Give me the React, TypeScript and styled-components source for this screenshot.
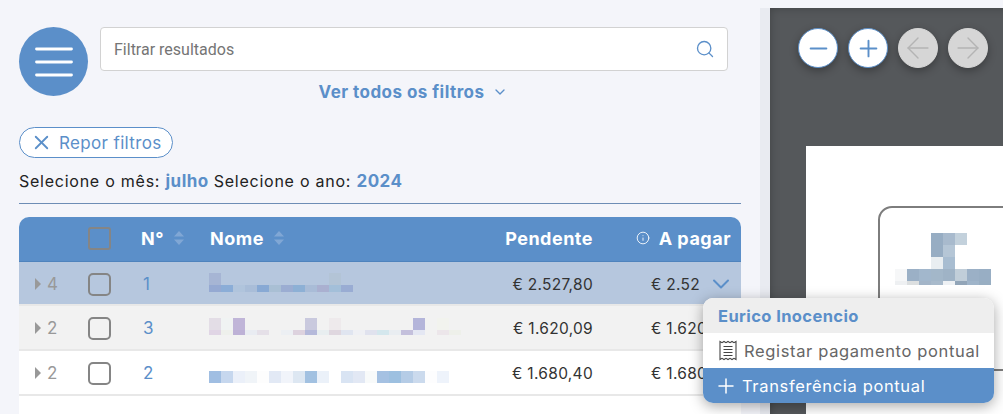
import React from 'react';
import styled, { createGlobalStyle } from 'styled-components';
import { ArrowLeft, ArrowRight, ChevronDown, Info, Minus, Plus, Search, X } from 'lucide-react';

const BLUE = '#5b8fc9';

const GlobalStyle = createGlobalStyle`
  html, body {
    margin: 0;
    padding: 0;
    background: #f4f5fa;
    font-family: Inter, "Liberation Sans", sans-serif;
  }
  * { box-sizing: border-box; }
`;

type Band = { y: number; h: number; colors: string[] };

const rowMosaics: Record<string, Band[]> = {
  first: [
    { y: 11, h: 12, colors: ['#a6b5d4', '', '', '', '', '', '', '', '', '', '#b3c4d6'] },
    { y: 23, h: 7, colors: ['#95a9d2', '#8badd7', '#b0c4dc', '#a9bdd8', '#88a9d4', '#a9bfd4', '#9badd2', '#8db0d5', '#a9bcd7', '#aab0d0', '#a3bfd9', '#99acd3'] },
  ],
  second: [
    { y: 12, h: 12, colors: ['#e3dde6', '#f0f3f3', '#c0b5d8', '', '', '', '', '', '#c9c9de', '', '#eeeaec', '', '', '', '', '', '', '#b4b5da', '', '#f2f3ee'] },
    { y: 24, h: 5, colors: ['#e0d5e5', '#eef0ec', '#bdb1d6', '#e9ecf2', '#e5e0e8', '', '#eceff3', '#ddd2de', '#b5b9da', '#e8eef0', '#dfd7df', '#e0e5f0', '#eff0f4', '#e0e2ee', '#d4e7ed', '#e9edf1', '#c4c0dc', '#e4e7f3', '', '#ece6ea', '#eef0ea'] },
  ],
  third: [
    { y: 20, h: 12, colors: ['#a0bee2', '#c6d7ee', '#ebf0f9', '#f0f4f8', '#fdfdfd', '#e2e9f5', '#f1f4fa', '#dde7f2', '#a2c1e1', '#ebf1f9', '', '#d9e4f3', '#e2e8f4', '#f8fafa', '#a5c1e2', '#9dc0e0', '#b5cce6', '#cbdaed', '#fdfdfe', '#eef3fb'] },
  ],
};

const cardMosaic: Band[] = [
  { y: 0, h: 12, colors: ['', '', '', '#97adc3', '#a8bacd', '#c3d1dc'] },
  { y: 12, h: 12, colors: ['', '', '', '#97adc3', '#b5c6d6'] },
  { y: 24, h: 12, colors: ['', '', '', '#e9eef1', '#a8bdd1'] },
  { y: 36, h: 12, colors: ['#f6f7f8', '#9bb0c6', '#a2b7cc', '#a3b7c9', '#9fb3c6', '#c1ced9', '#9bb0c6', '#98aec4'] },
  { y: 48, h: 4, colors: ['#eef0f2', '#dcdfe0', '#a3b5c8', '#a8bacb', '#eef1f4', '#92a5b8', '#9fb4c9', '#98aec2'] },
];

const Mosaic: React.FC<{ bands: Band[]; width: number; height: number }> = ({ bands, width, height }) => (
  <svg width={width} height={height} style={{ display: 'block' }}>
    {bands.map((band) =>
      band.colors.map((color, i) =>
        color ? <rect key={`${band.y}-${i}`} x={i * 12} y={band.y} width={12} height={band.h} fill={color} /> : null,
      ),
    )}
  </svg>
);

const rows = [
  { count: 4, no: 1, mosaic: 'first', pending: '€ 2.527,80', pay: '€ 2.52', tone: 'selected' as const },
  { count: 2, no: 3, mosaic: 'second', pending: '€ 1.620,09', pay: '€ 1.620,09', tone: 'grey' as const },
  { count: 2, no: 2, mosaic: 'third', pending: '€ 1.680,40', pay: '€ 1.680,40', tone: 'white' as const },
];

const rowBackgrounds = { selected: '#b6c7de', grey: '#f2f2f2', white: '#ffffff' };

export default function App() {
  return (
    <Page>
      <GlobalStyle />
      <LeftPanel>
        <TopRow>
          <MenuButton>
            <svg width="38" height="30" viewBox="0 0 38 30">
              <path d="M1.5 2h35M1.5 15h35M1.5 28h35" stroke="#fff" strokeWidth="2.8" strokeLinecap="round" />
            </svg>
          </MenuButton>
          <SearchColumn>
            <SearchBox>
              <SearchInput>Filtrar resultados</SearchInput>
              <Search size={20} color={BLUE} strokeWidth={1.6} />
            </SearchBox>
            <AllFilters>
              Ver todos os filtros
              <ChevronDown size={16} strokeWidth={2} />
            </AllFilters>
          </SearchColumn>
        </TopRow>

        <ResetPill>
          <X size={23} strokeWidth={1.9} />
          Repor filtros
        </ResetPill>

        <PeriodLine>
          Selecione o mês: <strong>julho</strong>
          <PeriodGap />
          Selecione o ano: <strong>2024</strong>
        </PeriodLine>
        <Divider />

        <Table>
          <HeaderRow>
            <span />
            <Checkbox $onBlue />
            <HeaderCell>
              N°
              <SortIcon />
            </HeaderCell>
            <HeaderCell>
              Nome
              <SortIcon />
            </HeaderCell>
            <HeaderCell $right>Pendente</HeaderCell>
            <PayHeader>
              <Info size={14} strokeWidth={1.5} />
              A pagar
            </PayHeader>
          </HeaderRow>

          {rows.map((row) => (
            <Row key={row.no} $tone={row.tone}>
              <CountCell>
                <Caret />
                {row.count}
              </CountCell>
              <Checkbox />
              <NumberCell>{row.no}</NumberCell>
              <NameCell>
                <Mosaic bands={rowMosaics[row.mosaic]} width={256} height={44} />
              </NameCell>
              <AmountCell>{row.pending}</AmountCell>
              <PayCell>
                {row.pay}
                {row.tone === 'selected' && <ChevronDown size={28} strokeWidth={1.7} color={BLUE} />}
              </PayCell>
            </Row>
          ))}
        </Table>
      </LeftPanel>

      <Viewer>
        <ViewerTools>
          <RoundButton>
            <Minus size={27} strokeWidth={1.7} />
          </RoundButton>
          <RoundButton>
            <Plus size={27} strokeWidth={1.7} />
          </RoundButton>
          <RoundButton $disabled>
            <ArrowLeft size={34} strokeWidth={1} />
          </RoundButton>
          <RoundButton $disabled>
            <ArrowRight size={34} strokeWidth={1} />
          </RoundButton>
        </ViewerTools>
        <Sheet>
          <SheetCard>
            <Mosaic bands={cardMosaic} width={96} height={52} />
          </SheetCard>
        </Sheet>
      </Viewer>

      <ContextMenu>
        <MenuTitle>Eurico Inocencio</MenuTitle>
        <MenuItem>
          <svg width="18" height="21" viewBox="0 0 18 21" fill="none" stroke="#444" strokeWidth="1.1">
            <path d="M1 1.5l2 1.2 2-1.2 2 1.2 2-1.2 2 1.2 2-1.2 2 1.2 2-1.2v18l-2-1.2-2 1.2-2-1.2-2 1.2-2-1.2-2 1.2-2-1.2-2 1.2z" />
            <path d="M4.5 6.5h9M4.5 9.5h9M4.5 12.5h9M4.5 15.5h9" />
          </svg>
          Registar pagamento pontual
        </MenuItem>
        <MenuItem $active>
          <Plus size={24} strokeWidth={1.5} />
          Transferência pontual
        </MenuItem>
      </ContextMenu>
    </Page>
  );
}

const SortIcon = () => (
  <svg width="10" height="14" viewBox="0 0 10 14" fill="#80a7d5">
    <path d="M5 0l5 5.5H0zM5 14L0 8.5h10z" />
  </svg>
);

const Page = styled.div`
  position: relative;
  display: flex;
  width: 1003px;
  height: 414px;
  overflow: hidden;
  background: #f4f5fa;
`;

const LeftPanel = styled.div`
  display: flex;
  flex-direction: column;
  flex: 0 0 760px;
  padding: 27px 19px 0;
`;

const TopRow = styled.div`
  display: flex;
  gap: 12px;
  padding-right: 13px;
`;

const MenuButton = styled.div`
  display: flex;
  align-items: center;
  justify-content: center;
  flex: 0 0 69px;
  height: 69px;
  border-radius: 50%;
  background: ${BLUE};
`;

const SearchColumn = styled.div`
  display: flex;
  flex-direction: column;
  flex: 1;
`;

const SearchBox = styled.div`
  display: flex;
  align-items: center;
  justify-content: space-between;
  height: 44px;
  padding: 0 12px 0 13px;
  background: #fff;
  border: 1px solid #d2d2d2;
  border-radius: 4px;
`;

const SearchInput = styled.span`
  font-family: Roboto, sans-serif;
  font-size: 16px;
  color: #757575;
`;

const AllFilters = styled.div`
  display: flex;
  align-items: center;
  justify-content: center;
  gap: 8px;
  margin-top: 11px;
  padding-right: 1px;
  font-size: 17px;
  font-weight: 700;
  letter-spacing: 0.45px;
  line-height: 20px;
  color: ${BLUE};
`;

const ResetPill = styled.div`
  display: flex;
  align-items: center;
  gap: 6px;
  align-self: flex-start;
  width: 154px;
  height: 31px;
  margin-top: 25px;
  padding-left: 10px;
  border: 1px solid ${BLUE};
  border-radius: 16px;
  background: #fff;
  font-size: 17px;
  letter-spacing: 0.35px;
  color: ${BLUE};
`;

const PeriodLine = styled.div`
  margin-top: 13px;
  font-size: 16px;
  line-height: 20px;
  letter-spacing: 0.75px;
  color: #222;
  white-space: nowrap;

  strong {
    font-size: 17px;
    font-weight: 700;
    letter-spacing: 0.5px;
    color: ${BLUE};
  }
`;

const PeriodGap = styled.span`
  display: inline-block;
  width: 5px;
`;

const Divider = styled.div`
  height: 1px;
  margin-top: 12px;
  background: #6d8db5;
`;

const Table = styled.div`
  flex: 1;
  margin-top: 13px;
  background: #fff;
  border-radius: 10px 10px 0 0;
  overflow: hidden;
`;

const columns = '69px 53px 69px 1fr 120px 148px';

const HeaderRow = styled.div`
  display: grid;
  grid-template-columns: ${columns};
  align-items: center;
  height: 45px;
  padding-bottom: 2px;
  background: ${BLUE};
  border-bottom: 1px solid #4f83bd;
`;

const HeaderCell = styled.div<{ $right?: boolean }>`
  display: flex;
  align-items: center;
  justify-content: ${({ $right }) => ($right ? 'flex-end' : 'flex-start')};
  gap: 10px;
  font-size: 18px;
  font-weight: 700;
  letter-spacing: 0.5px;
  color: #fff;
`;

const PayHeader = styled(HeaderCell)`
  justify-content: flex-end;
  gap: 9px;
  padding-right: 10px;
`;

const Row = styled.div<{ $tone: keyof typeof rowBackgrounds }>`
  display: grid;
  grid-template-columns: ${columns};
  align-items: center;
  height: 45px;
  background: ${({ $tone }) => rowBackgrounds[$tone]};
  border-bottom: 2px solid #e8e8e8;
  font-size: 15.5px;

  &:nth-child(2) {
    height: 44px;
  }
`;

const CountCell = styled.div`
  display: flex;
  align-items: center;
  gap: 6px;
  padding-left: 16px;
  font-size: 17px;
  color: #999;
`;

const Caret = styled.span`
  width: 0;
  height: 0;
  border-left: 6px solid #999;
  border-top: 6px solid transparent;
  border-bottom: 6px solid transparent;
`;

const Checkbox = styled.span<{ $onBlue?: boolean }>`
  display: block;
  width: 23px;
  height: 23px;
  border: 2px solid #858585;
  border-radius: ${({ $onBlue }) => ($onBlue ? '3px' : '5px')};
`;

const NumberCell = styled.div`
  padding-left: 2px;
  font-size: 17px;
  color: ${BLUE};
`;

const NameCell = styled.div`
  align-self: start;
  margin-left: -1px;
`;

const AmountCell = styled.div`
  text-align: right;
  letter-spacing: 0.3px;
  color: #333;
`;

const PayCell = styled.div`
  display: flex;
  align-items: center;
  gap: 7px;
  padding-left: 58px;
  letter-spacing: 0.3px;
  color: #333;
  white-space: nowrap;
`;

const Viewer = styled.div`
  position: relative;
  display: flex;
  flex-direction: column;
  flex: 1;
  min-width: 0;
  margin-top: 8px;
  background: #55585b;
  border-left: 10px solid #e9ebf1;
  box-shadow: inset 6px 6px 10px -6px rgba(0, 0, 0, 0.25);
`;

const ViewerTools = styled.div`
  display: flex;
  gap: 10px;
  padding: 20px 0 0 28px;
`;

const RoundButton = styled.div<{ $disabled?: boolean }>`
  display: flex;
  align-items: center;
  justify-content: center;
  flex: 0 0 40px;
  height: 40px;
  border-radius: 50%;
  background: ${({ $disabled }) => ($disabled ? '#d6d6d6' : '#fff')};
  border: 1px solid ${({ $disabled }) => ($disabled ? '#d6d6d6' : BLUE)};
  color: ${({ $disabled }) => ($disabled ? '#b4b4b4' : BLUE)};
  box-shadow: 0 3px 8px rgba(0, 0, 0, 0.3);
`;

const Sheet = styled.div`
  flex: 1;
  margin: 78px 0 0 36px;
  padding: 60px 0 0 72px;
  background: #fff;
`;

const SheetCard = styled.div`
  width: 220px;
  height: 165px;
  padding: 25px 0 0 15px;
  border: 2px solid #7d7d7d;
  border-radius: 14px;
`;

const ContextMenu = styled.div`
  position: absolute;
  left: 703px;
  top: 298px;
  width: 291px;
  border-radius: 10px;
  overflow: hidden;
  background: #fff;
  box-shadow: 0 3px 14px rgba(0, 0, 0, 0.35);
`;

const MenuTitle = styled.div`
  height: 35px;
  padding-left: 15px;
  background: #eeeeee;
  font-size: 16.5px;
  font-weight: 700;
  letter-spacing: 0.4px;
  line-height: 36px;
  color: ${BLUE};
`;

const MenuItem = styled.div<{ $active?: boolean }>`
  display: flex;
  align-items: center;
  gap: ${({ $active }) => ($active ? '4px' : '7px')};
  height: 35px;
  padding-left: ${({ $active }) => ($active ? '11px' : '16px')};
  background: ${({ $active }) => ($active ? BLUE : '#fff')};
  font-size: 16.5px;
  letter-spacing: 0.65px;
  color: ${({ $active }) => ($active ? '#fff' : '#666')};
`;
